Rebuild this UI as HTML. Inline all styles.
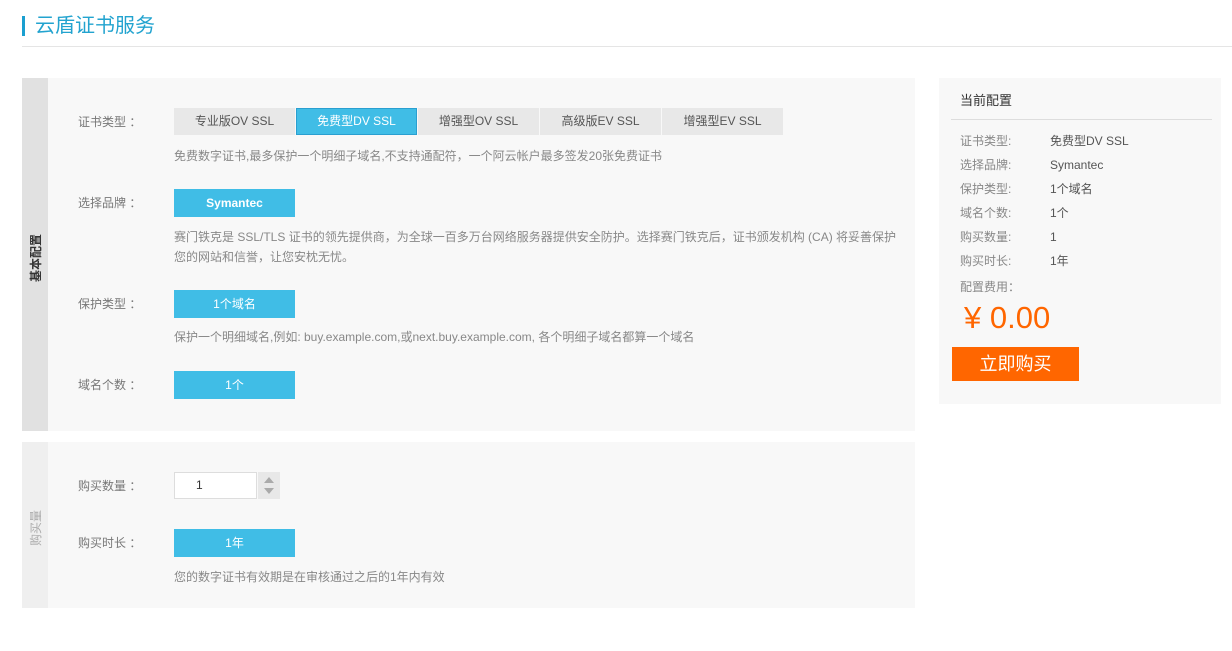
<!DOCTYPE html>
<html><head><meta charset="utf-8"><style>
*{margin:0;padding:0;box-sizing:border-box}
body{width:1232px;height:651px;background:#fff;font-family:"Liberation Sans","Noto Sans CJK SC",sans-serif;font-size:12px;color:#666;position:relative;overflow:hidden}
.a{position:absolute}
.hd{left:22px;top:16px;width:3px;height:20px;background:#1a9fd0}
.ht{left:35px;top:12px;font-size:20px;color:#22a3cf;line-height:28px}
.hl{left:22px;top:46px;width:1210px;height:1px;background:#e5e5e5}
.p{background:#f8f8f8}
.sb{background:#e1e1e1}
.lbl{font-size:12px;color:#777;line-height:16px}
.btn{height:28px;width:121px;background:#40bde6;color:#fff;font-size:12px;line-height:28px;text-align:center}
.tab{top:108px;height:27px;width:121px;background:#e8e8e8;color:#555;line-height:27px;text-align:center}
.tab.on{background:#40bde6;color:#fff;border:1px solid #2a9fd0;line-height:25px}
.d{font-size:12px;color:#888;line-height:20px}
.rl{left:960px;color:#888;font-size:12px;line-height:16px}
.rv{left:1050px;color:#555;font-size:12px;line-height:16px}
.vt{transform:rotate(-90deg);transform-origin:center;font-size:12px;font-weight:bold;white-space:nowrap}
</style></head><body>
<div class="a hd"></div><div class="a ht">云盾证书服务</div><div class="a hl"></div>

<div class="a p" style="left:22px;top:78px;width:893px;height:353px"></div>
<div class="a sb" style="left:22px;top:78px;width:26px;height:353px"></div>
<div class="a vt" style="left:10px;top:250px;width:50px;height:16px;text-align:center;color:#333">基本配置</div>

<div class="a lbl" style="left:78px;top:114px">证书类型 ：</div>
<div class="a tab" style="left:174px">专业版OV SSL</div>
<div class="a tab on" style="left:296px">免费型DV SSL</div>
<div class="a tab" style="left:418px">增强型OV SSL</div>
<div class="a tab" style="left:540px">高级版EV SSL</div>
<div class="a tab" style="left:662px">增强型EV SSL</div>
<div class="a d" style="left:174px;top:146px">免费数字证书,最多保护一个明细子域名,不支持通配符，一个阿云帐户最多签发20张免费证书</div>

<div class="a lbl" style="left:78px;top:195px">选择品牌 ：</div>
<div class="a btn" style="left:174px;top:189px;font-weight:bold">Symantec</div>
<div class="a d" style="left:174px;top:227px;width:730px">赛门铁克是 SSL/TLS 证书的领先提供商，为全球一百多万台网络服务器提供安全防护。选择赛门铁克后，证书颁发机构 (CA) 将妥善保护您的网站和信誉，让您安枕无忧。</div>

<div class="a lbl" style="left:78px;top:296px">保护类型 ：</div>
<div class="a btn" style="left:174px;top:290px">1个域名</div>
<div class="a d" style="left:174px;top:327px">保护一个明细域名,例如: buy.example.com,或next.buy.example.com, 各个明细子域名都算一个域名</div>

<div class="a lbl" style="left:78px;top:377px">域名个数 ：</div>
<div class="a btn" style="left:174px;top:371px">1个</div>

<div class="a p" style="left:22px;top:442px;width:893px;height:166px"></div>
<div class="a" style="left:22px;top:442px;width:26px;height:166px;background:#efefef"></div>
<div class="a vt" style="left:10px;top:520px;width:50px;height:16px;text-align:center;color:#aaa;font-weight:normal">购买量</div>

<div class="a lbl" style="left:78px;top:478px">购买数量 ：</div>
<div class="a" style="left:174px;top:472px;width:83px;height:27px;background:#fff;border:1px solid #ddd;padding-left:21px;line-height:25px;color:#333">1</div>
<div class="a" style="left:258px;top:472px;width:22px;height:27px;background:#e8e8e8"></div>
<div class="a" style="left:264px;top:477px;border-left:5px solid transparent;border-right:5px solid transparent;border-bottom:6px solid #aaa"></div>
<div class="a" style="left:264px;top:488px;border-left:5px solid transparent;border-right:5px solid transparent;border-top:6px solid #aaa"></div>

<div class="a lbl" style="left:78px;top:535px">购买时长 ：</div>
<div class="a btn" style="left:174px;top:529px">1年</div>
<div class="a d" style="left:174px;top:567px">您的数字证书有效期是在审核通过之后的1年内有效</div>

<div class="a p" style="left:939px;top:78px;width:282px;height:326px"></div>
<div class="a" style="left:960px;top:90px;font-size:13px;color:#333">当前配置</div>
<div class="a" style="left:951px;top:119px;width:261px;height:1px;background:#ddd"></div>
<div class="a rl" style="top:133px">证书类型:</div><div class="a rv" style="top:133px">免费型DV SSL</div>
<div class="a rl" style="top:157px">选择品牌:</div><div class="a rv" style="top:157px">Symantec</div>
<div class="a rl" style="top:181px">保护类型:</div><div class="a rv" style="top:181px">1个域名</div>
<div class="a rl" style="top:205px">域名个数:</div><div class="a rv" style="top:205px">1个</div>
<div class="a rl" style="top:229px">购买数量:</div><div class="a rv" style="top:229px">1</div>
<div class="a rl" style="top:253px">购买时长:</div><div class="a rv" style="top:253px">1年</div>
<div class="a rl" style="top:279px">配置费用：</div>
<div class="a" style="left:964px;top:298px;font-size:31px;color:#f60;line-height:40px">¥ 0.00</div>
<div class="a" style="left:952px;top:347px;width:127px;height:34px;background:#f60;color:#fff;font-size:18px;line-height:34px;text-align:center">立即购买</div>
</body></html>
